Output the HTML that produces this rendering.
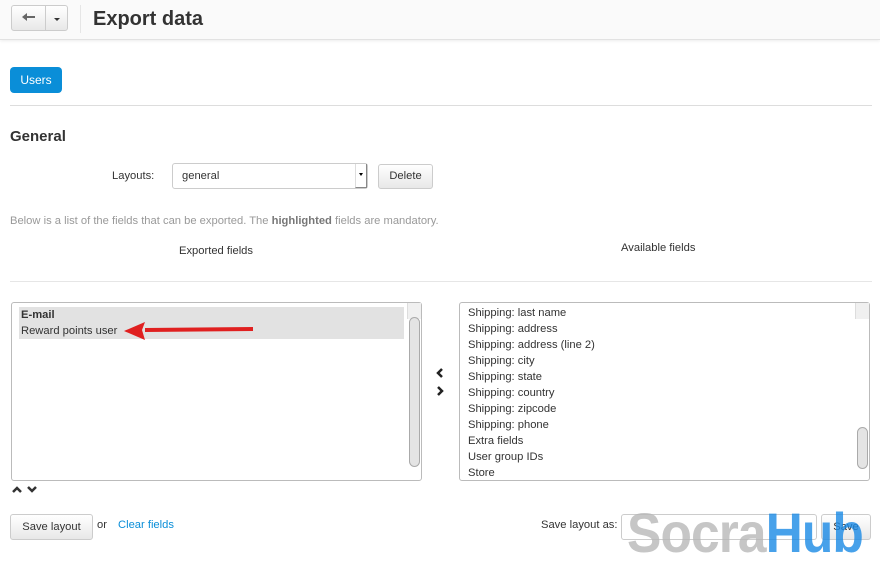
<!DOCTYPE html>
<html><head><meta charset="utf-8"><style>
*{box-sizing:border-box;margin:0;padding:0}
body{width:880px;height:563px;overflow:hidden;background:#fff;font-family:"Liberation Sans",sans-serif;font-size:11.2px;color:#333;position:relative}
.abs{position:absolute}
.btn{position:absolute;border:1px solid #ccc;border-radius:3px;background:linear-gradient(#fff,#e8e8e8);font-size:12px;color:#333;text-align:center}
.list div{height:16px;line-height:16px;font-size:11.2px}
.sb{position:absolute;top:0;right:0;width:14px;height:100%;background:#f0f0f0;border-left:1px solid #ddd}
.thumb{position:absolute;left:1px;width:11px;background:#e4e4e4;border:1px solid #aaa;border-radius:6px}
</style></head><body>
<div class="abs" style="left:0;top:0;width:880px;height:40px;background:#fafafa;border-bottom:1px solid #e2e2e2;box-shadow:0 1px 3px rgba(0,0,0,.08)"></div>
<div class="btn" style="left:11px;top:5px;width:35px;height:26px;border-radius:3px 0 0 3px"><svg width="14" height="10" style="margin-top:7px" viewBox="0 0 14 10"><path d="M5 0L0 4L5 8V5H13V3H5Z" fill="#666"/></svg></div>
<div class="btn" style="left:45px;top:5px;width:23px;height:26px;border-radius:0 3px 3px 0"><div style="margin:12px auto 0;width:0;height:0;border-left:3px solid transparent;border-right:3px solid transparent;border-top:3px solid #333"></div></div>
<div class="abs" style="left:80px;top:5px;width:1px;height:28px;background:#e6e6e6"></div>
<div class="abs" style="left:93px;top:8px;font-size:20px;font-weight:bold;color:#333">Export data</div>
<div class="abs" style="left:10px;top:67px;width:52px;height:26px;background:#0a8ed8;border-radius:4px;color:#fff;font-size:12px;line-height:26px;text-align:center">Users</div>
<div class="abs" style="left:10px;top:105px;width:862px;height:1px;background:#ddd"></div>
<div class="abs" style="left:10px;top:128px;font-size:15px;font-weight:bold;color:#333">General</div>
<div class="abs" style="left:112px;top:170px">Layouts:</div>
<div class="abs" style="left:172px;top:163px;width:196px;height:26px;border:1px solid #ccc;border-radius:3px;background:#fff;line-height:24px;padding-left:9px">general</div>
<div class="abs" style="left:355px;top:164px;width:12px;height:24px;border-left:1px solid #ddd;border-right:1px solid #888;border-bottom:1px solid #888"><div style="margin:9px auto 0;width:0;height:0;border-left:2.5px solid transparent;border-right:2.5px solid transparent;border-top:3px solid #000"></div></div>
<div class="btn" style="left:378px;top:164px;width:55px;height:25px;line-height:23px;font-size:11.2px">Delete</div>
<div class="abs" style="left:10px;top:215px;color:#999">Below is a list of the fields that can be exported. The <b style="color:#777">highlighted</b> fields are mandatory.</div>
<div class="abs" style="left:179px;top:245px">Exported fields</div>
<div class="abs" style="left:621px;top:242px">Available fields</div>
<div class="abs" style="left:10px;top:281px;width:862px;height:1px;background:#e6e6e6"></div>
<div class="abs list" style="left:11px;top:302px;width:411px;height:179px;border:1px solid #bbb;border-radius:3px;padding:4px 0 0 7px">
<div style="width:385px;background:#e2e2e2;font-weight:bold;padding-left:2px">E-mail</div>
<div style="width:385px;background:#e2e2e2;padding-left:2px">Reward points user</div>
<div class="sb"><div class="thumb" style="top:14px;height:150px"></div></div>
</div>
<svg class="abs" style="left:120px;top:320px" width="135" height="22" viewBox="0 0 135 22"><path d="M133 9L25 10" stroke="#e02020" stroke-width="4"/><path d="M4 11L25 2L22 10L25 20Z" fill="#e02020"/></svg>
<svg class="abs" style="left:435px;top:368px" width="10" height="30" viewBox="0 0 10 30"><path d="M7 1L3 5L7 9" stroke="#222" stroke-width="2.5" fill="none"/><path d="M3 19L7 23L3 27" stroke="#222" stroke-width="2.5" fill="none"/></svg>
<div class="abs list" style="left:459px;top:302px;width:411px;height:179px;border:1px solid #bbb;border-radius:3px;padding:2px 0 0 8px">
<div>Shipping: last name</div><div>Shipping: address</div><div>Shipping: address (line 2)</div><div>Shipping: city</div><div>Shipping: state</div><div>Shipping: country</div><div>Shipping: zipcode</div><div>Shipping: phone</div><div>Extra fields</div><div>User group IDs</div><div>Store</div>
<div class="sb"><div class="thumb" style="top:124px;height:42px"></div></div>
</div>
<svg class="abs" style="left:12px;top:485px" width="28" height="9" viewBox="0 0 28 9"><path d="M1 7L5 3L9 7" stroke="#333" stroke-width="2.5" fill="none"/><path d="M16 2L20 6L24 2" stroke="#333" stroke-width="2.5" fill="none"/></svg>
<div class="btn" style="left:10px;top:514px;width:83px;height:26px;line-height:24px;font-size:11.2px">Save layout</div>
<div class="abs" style="left:97px;top:519px">or</div>
<div class="abs" style="left:118px;top:519px;color:#0a8ed8">Clear fields</div>
<div class="abs" style="left:541px;top:519px">Save layout as:</div>
<div class="abs" style="left:621px;top:514px;width:196px;height:26px;border:1px solid #ccc;border-radius:3px;background:#fff"></div>
<div class="btn" style="left:821px;top:514px;width:50px;height:26px;line-height:24px;font-size:11.2px">Save</div>
<div class="abs" style="left:627px;top:500px;font-size:56px;font-weight:bold;letter-spacing:-1px;line-height:66px;opacity:.8;transform:scaleX(0.92);transform-origin:left top;white-space:nowrap"><span style="color:#b8b8b8">Socra</span><span style="color:#1a8ae6">Hub</span></div>
</body></html>
